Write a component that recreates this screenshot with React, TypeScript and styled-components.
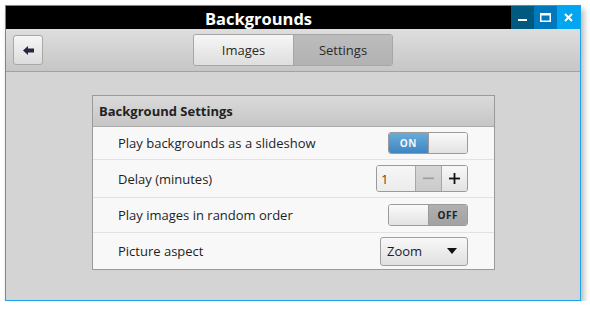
import styled, { createGlobalStyle } from "styled-components";

const Global = createGlobalStyle`
  html, body { margin: 0; padding: 0; background: #ffffff; }
  body { font-family: "Open Sans", "Noto Sans", sans-serif; }
  * { box-sizing: border-box; }
`;

// Окно целиком
const Window = styled.div`
  margin: 5px 0 0 5px;
  width: 576px;
  height: 296px;
  border: 1px solid #1aa4ee;
  background: #d4d4d4;
  display: flex;
  flex-direction: column;
  box-shadow: 3px 4px 6px rgba(0, 0, 0, 0.28);
`;

const TitleBar = styled.div`
  height: 23px;
  background: #000;
  display: flex;
  align-items: stretch;
`;

const Title = styled.div`
  flex: 1;
  color: #fff;
  font-weight: 700;
  font-size: 16.5px;
  display: flex;
  align-items: center;
  justify-content: center;
  padding-top: 1px;
`;

const WinButton = styled.div<{ $bg: string }>`
  width: 23px;
  background: ${(p) => p.$bg};
  display: flex;
  align-items: center;
  justify-content: center;
`;

const ToolBar = styled.div`
  height: 43px;
  background: linear-gradient(#dedede, #c6c6c6);
  border-bottom: 1px solid #a2a2a2;
  display: flex;
  align-items: center;
  padding: 0 0 0 7px;
`;

const BackButton = styled.div`
  width: 30px;
  height: 30px;
  border: 1px solid #a8a8a8;
  border-radius: 3px;
  background: linear-gradient(#f6f6f6, #dcdcdc);
  display: flex;
  align-items: center;
  justify-content: center;
`;

const Segments = styled.div`
  display: flex;
  margin-left: 150px;
  border: 1px solid #a6a6a6;
  border-radius: 3px;
  overflow: hidden;
`;

const Segment = styled.div<{ $active?: boolean }>`
  width: 99px;
  height: 30px;
  display: flex;
  align-items: center;
  justify-content: center;
  font-size: 13px;
  color: #2a2a2a;
  background: ${(p) =>
    p.$active ? "linear-gradient(#bcbcbc, #b2b2b2)" : "linear-gradient(#f6f6f6, #dedede)"};
  & + & {
    border-left: 1px solid #a6a6a6;
  }
`;

const Content = styled.div`
  flex: 1;
  padding: 23px 0 0 86px;
`;

const Panel = styled.div`
  width: 403px;
  border: 1px solid #9a9a9a;
  background: #f8f8f8;
`;

const PanelHeader = styled.div`
  height: 31px;
  background: linear-gradient(#dadada, #c6c6c6);
  border-bottom: 1px solid #ababab;
  display: flex;
  align-items: center;
  padding-left: 6px;
  font-weight: 700;
  font-size: 13px;
  color: #222;
`;

const Row = styled.div<{ $h: number }>`
  height: ${(p) => p.$h}px;
  display: flex;
  align-items: center;
  justify-content: space-between;
  padding: 0 26px 0 25px;
  font-size: 13px;
  color: #1e1e1e;
  & + & {
    border-top: 1px solid #e2e2e2;
  }
`;

const Toggle = styled.div`
  width: 80px;
  height: 22px;
  border: 1px solid #9a9a9a;
  border-radius: 3px;
  display: flex;
  overflow: hidden;
`;

const ToggleHalf = styled.div<{ $kind: "on" | "off" | "thumb" }>`
  flex: 1;
  display: flex;
  align-items: center;
  justify-content: center;
  font-size: 10px;
  font-weight: 700;
  letter-spacing: 0.5px;
  color: ${(p) => (p.$kind === "on" ? "#f0f6fb" : "#222")};
  background: ${(p) =>
    p.$kind === "on"
      ? "linear-gradient(#68acd8, #3f86c2)"
      : p.$kind === "off"
      ? "linear-gradient(#b0b0b0, #a2a2a2)"
      : "linear-gradient(#fafafa, #e2e2e2)"};
  & + & {
    border-left: 1px solid #9a9a9a;
  }
`;

const Spinner = styled.div`
  width: 92px;
  height: 27px;
  border: 1px solid #9a9a9a;
  border-radius: 3px;
  display: flex;
  overflow: hidden;
`;

const SpinField = styled.div`
  flex: 1;
  background: linear-gradient(#f6f6f6, #ececec);
  display: flex;
  align-items: center;
  padding-left: 4px;
  font-size: 13px;
  color: #7a3a10;
`;

const SpinButton = styled.div<{ $disabled?: boolean }>`
  width: 26px;
  border-left: 1px solid #a8a8a8;
  background: ${(p) =>
    p.$disabled ? "linear-gradient(#d6d6d6, #cacaca)" : "linear-gradient(#f8f8f8, #e2e2e2)"};
  display: flex;
  align-items: center;
  justify-content: center;
`;

const Combo = styled.div`
  width: 88px;
  height: 29px;
  border: 1px solid #a0a0a0;
  border-radius: 3px;
  background: linear-gradient(#f8f8f8, #e0e0e0);
  display: flex;
  align-items: center;
  justify-content: space-between;
  padding: 0 10px 0 6px;
  font-size: 13px;
  color: #1e1e1e;
`;

export default function App() {
  return (
    <>
      <Global />
      <Window>
        <TitleBar>
          <Title>Backgrounds</Title>
          <WinButton $bg="#005a80">
            <svg width="9" height="9" viewBox="0 0 9 9">
              <rect x="0" y="6" width="9" height="2" fill="#fff" />
            </svg>
          </WinButton>
          <WinButton $bg="#0078bb">
            <svg width="11" height="9" viewBox="0 0 11 9">
              <rect x="0.75" y="0.75" width="9.5" height="7.5" fill="none" stroke="#fff" strokeWidth="1.5" />
              <rect x="0.5" y="0.5" width="10" height="2" fill="#fff" />
            </svg>
          </WinButton>
          <WinButton $bg="#00a6f0">
            <svg width="9" height="9" viewBox="0 0 9 9">
              <path d="M1 1 L8 8 M8 1 L1 8" stroke="#fff" strokeWidth="2" />
            </svg>
          </WinButton>
        </TitleBar>

        <ToolBar>
          <BackButton>
            <svg width="11" height="9" viewBox="0 0 11 9">
              <path d="M0 4.5 L5 0 L5 2.5 L11 2.5 L11 6.5 L5 6.5 L5 9 Z" fill="#2a2440" />
            </svg>
          </BackButton>
          <Segments>
            <Segment>Images</Segment>
            <Segment $active>Settings</Segment>
          </Segments>
        </ToolBar>

        <Content>
          <Panel>
            <PanelHeader>Background Settings</PanelHeader>
            <Row $h={32}>
              <span>Play backgrounds as a slideshow</span>
              <Toggle>
                <ToggleHalf $kind="on">ON</ToggleHalf>
                <ToggleHalf $kind="thumb" />
              </Toggle>
            </Row>
            <Row $h={38}>
              <span>Delay (minutes)</span>
              <Spinner>
                <SpinField>1</SpinField>
                <SpinButton $disabled>
                  <svg width="11" height="11" viewBox="0 0 11 11">
                    <rect x="0" y="4.5" width="11" height="1.6" fill="#9c9c9c" />
                  </svg>
                </SpinButton>
                <SpinButton>
                  <svg width="11" height="11" viewBox="0 0 11 11">
                    <rect x="0" y="4.6" width="11" height="1.8" fill="#111" />
                    <rect x="4.6" y="0" width="1.8" height="11" fill="#111" />
                  </svg>
                </SpinButton>
              </Spinner>
            </Row>
            <Row $h={35}>
              <span>Play images in random order</span>
              <Toggle>
                <ToggleHalf $kind="thumb" />
                <ToggleHalf $kind="off">OFF</ToggleHalf>
              </Toggle>
            </Row>
            <Row $h={37}>
              <span>Picture aspect</span>
              <Combo>
                <span>Zoom</span>
                <svg width="10" height="6" viewBox="0 0 10 6">
                  <path d="M0 0 L10 0 L5 6 Z" fill="#111" />
                </svg>
              </Combo>
            </Row>
          </Panel>
        </Content>
      </Window>
    </>
  );
}
